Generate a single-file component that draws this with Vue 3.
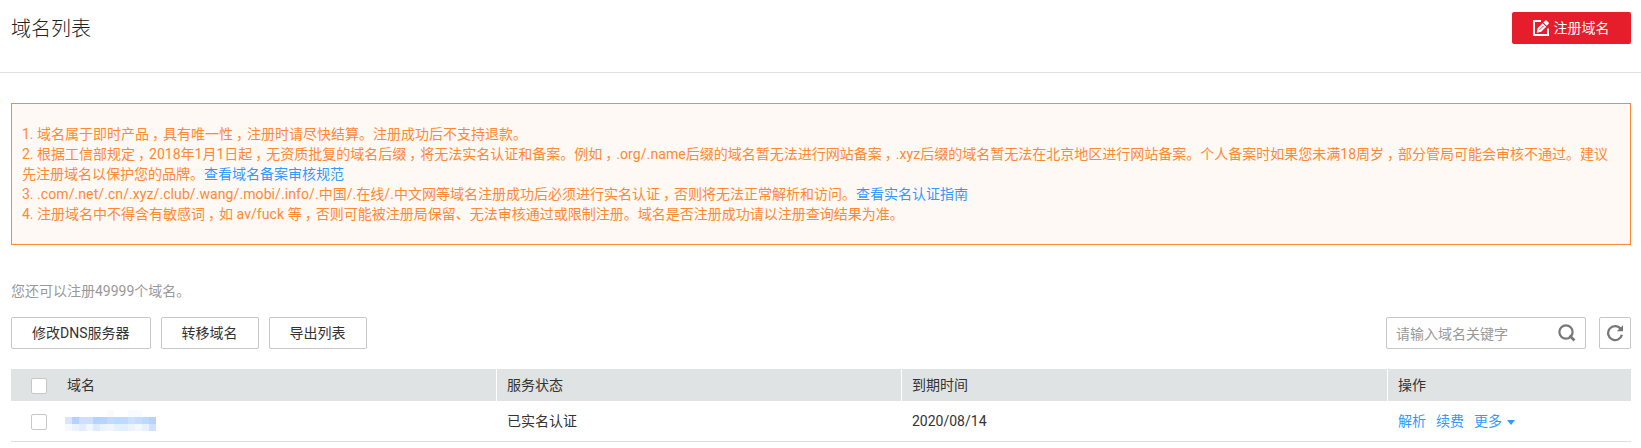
<script setup>
import { ref } from 'vue'

const actions = ['修改DNS服务器', '转移域名', '导出列表']
const columns = ['域名', '服务状态', '到期时间', '操作']
const keyword = ref('')

const notices = [
  { text: '1. 域名属于即时产品，具有唯一性，注册时请尽快结算。注册成功后不支持退款。' },
  {
    text: '2. 根据工信部规定，2018年1月1日起，无资质批复的域名后缀，将无法实名认证和备案。例如，.org/.name后缀的域名暂无法进行网站备案，.xyz后缀的域名暂无法在北京地区进行网站备案。个人备案时如果您未满18周岁，部分管局可能会审核不通过。建议先注册域名以保护您的品牌。',
    link: '查看域名备案审核规范',
  },
  {
    text: '3. .com/.net/.cn/.xyz/.club/.wang/.mobi/.info/.中国/.在线/.中文网等域名注册成功后必须进行实名认证，否则将无法正常解析和访问。',
    link: '查看实名认证指南',
  },
  { text: '4. 注册域名中不得含有敏感词，如 av/fuck 等，否则可能被注册局保留、无法审核通过或限制注册。域名是否注册成功请以注册查询结果为准。' },
]

// Splits out commas and suffix lists, which get their own spacing
const split = (text) => text.split(/(，|[./a-z]{2,})/).filter(Boolean)
const kind = (part) => (part === '，' ? 'comma' : /^[./a-z]{2,}$/.test(part) ? 'latin' : null)

// Tiles of the masked domain name, top row to bottom row
const mask = [
  ['', '', '', '', '', '', '#f9fbff', '', '', '#f9fbff', '#f9fbff', '', ''],
  ['#dae6ff', '#b5d2ff', '#d1deff', '#cce1ff', '#b3d4ff', '#b9d3ff', '#c3d9ff', '#badbff', '#c2d8ff', '#cae2ff', '#c8dcff', '#bbdaff', '#b8d1ff'],
  ['#f5f9ff', '#ebf2ff', '#e2edff', '#f1f6ff', '#deebff', '#ebf3ff', '#f0f5ff', '#e5f0ff', '#e2efff', '#ebf3ff', '#f3f7ff', '#e8f2ff', '#d0e1ff'],
].flat()
</script>

<template>
  <main class="page">
    <header class="header">
      <h1>域名列表</h1>
      <button class="primary">
        <svg width="16" height="16" viewBox="0 0 16 16">
          <path d="M8 1H1v14h14V8.5" fill="none" stroke="#fff" stroke-width="2" />
          <path d="M3.8 12.8l.8-4.6 5-5 3.6 3.6-5 5zM10.4 2.4L12.3.5q.7-.6 1.3 0l2 2q.6.6 0 1.3L13.8 5.8z" fill="#fff" />
          <path d="M6.4 10l4.2-4.2" stroke="#e61e2b" stroke-width=".9" />
        </svg>
        <span>注册域名</span>
      </button>
    </header>

    <section class="notice">
      <p v-for="n in notices" :key="n.text"><span v-for="(part, i) in split(n.text)" :key="i" :class="kind(part)">{{ part }}</span><a v-if="n.link">{{ n.link }}</a></p>
    </section>

    <p class="quota">您还可以注册49999个域名。</p>

    <div class="toolbar">
      <button v-for="a in actions" :key="a" class="btn">{{ a }}</button>
      <label class="search">
        <input v-model="keyword" placeholder="请输入域名关键字" />
        <svg width="18" height="18" viewBox="0 0 18 18" fill="none" stroke="#777" stroke-width="2.2">
          <circle cx="8" cy="8" r="6.6" />
          <path d="M11.5 11.5l5 5" stroke-width="2.6" />
        </svg>
      </label>
      <button class="refresh">
        <svg width="18" height="18" viewBox="0 0 18 18">
          <path d="M14.6 4.7A7 7 0 1 0 15.9 10.8" fill="none" stroke="#777" stroke-width="2.3" />
          <path d="M17 1.2V7.3H10.8z" fill="#777" />
        </svg>
      </button>
    </div>

    <div class="table">
      <div class="row head">
        <div v-for="(c, i) in columns" :key="c" class="cell">
          <i v-if="i === 0" class="check"></i>
          <span>{{ c }}</span>
        </div>
      </div>
      <div class="row body">
        <div class="cell">
          <i class="check"></i>
          <div class="mask">
            <i v-for="(c, i) in mask" :key="i" :style="{ background: c }"></i>
          </div>
        </div>
        <div class="cell">已实名认证</div>
        <div class="cell">2020/08/14</div>
        <div class="cell links">
          <a>解析</a><a>续费</a><a>更多<i class="caret"></i></a>
        </div>
      </div>
    </div>
  </main>
</template>

<style>
body {
  margin: 0;
  background: #fff;
}
</style>

<style scoped>
* {
  box-sizing: border-box;
}
.page {
  height: 448px;
  font: 14px/20px Roboto, "Noto Sans CJK SC", sans-serif;
  color: #333;
}
h1,
p {
  margin: 0;
}
button,
input {
  font: inherit;
  color: inherit;
}
a {
  color: #3399ff;
}
svg {
  display: block;
  flex: none;
}
.header {
  display: flex;
  justify-content: space-between;
  height: 73px;
  padding: 12px 10px 0 11px;
  border-bottom: 1px solid #dfdfdf;
}
h1 {
  font-size: 20px;
  font-weight: 300;
  line-height: 34px;
  color: #222;
}
.primary {
  display: flex;
  align-items: center;
  justify-content: center;
  gap: 5px;
  width: 119px;
  height: 32px;
  padding: 0 1px 0 0;
  border: 0;
  border-radius: 2px;
  background: #e61e2b;
  color: #fff;
}
.notice {
  height: 142px;
  margin: 30px 10px 0 11px;
  padding: 20px 10px;
  border: 1px solid #ff8833;
  background: #fff9f5;
  color: #ff8833;
}
.comma {
  padding-left: 3px;
  letter-spacing: -3px;
}
.latin {
  letter-spacing: 0.085px;
}
.quota {
  margin: 36px 0 16px 11px;
  color: #999;
}
.toolbar {
  display: flex;
  margin: 0 10px 20px 11px;
}
.btn,
.refresh,
.search {
  height: 32px;
  border: 1px solid #c7c7c7;
  border-radius: 2px;
  background: #fff;
}
.btn {
  margin-right: 10px;
  padding: 0 20px;
}
.search {
  display: flex;
  align-items: center;
  width: 200px;
  margin-left: auto;
  padding: 0 9px;
}
.search input {
  flex: 1;
  min-width: 0;
  padding: 2px 0 0;
  border: 0;
  outline: 0;
  background: none;
}
.search input::placeholder {
  color: #999;
}
.refresh {
  display: flex;
  align-items: center;
  justify-content: center;
  width: 32px;
  margin-left: 13px;
  padding: 0;
}
.table {
  margin: 0 10px 0 11px;
}
.row {
  display: grid;
  grid-template-columns: 30fr 25fr 30fr 15fr;
}
.head {
  height: 32px;
  background: #dfe3e4;
}
.body {
  height: 41px;
  border-bottom: 1px solid #dfdfdf;
}
.cell {
  display: flex;
  align-items: center;
  padding: 0 10px;
}
.head .cell:not(:last-child) {
  border-right: 1px solid #fff;
}
.check {
  width: 16px;
  height: 16px;
  margin: 2px 20px 0 10px;
  border: 1px solid #c7c7c7;
  border-radius: 2px;
  background: #fff;
}
.mask {
  display: grid;
  grid-template-columns: repeat(13, 7px);
  grid-auto-rows: 7px;
  margin: 0 0 1px -2px;
}
.links {
  gap: 10px;
}
.links a {
  display: flex;
  align-items: center;
}
.caret {
  margin: 3px 0 0 5px;
  border: 4px solid transparent;
  border-top: 5px solid #3399ff;
  border-bottom: 0;
}
</style>
